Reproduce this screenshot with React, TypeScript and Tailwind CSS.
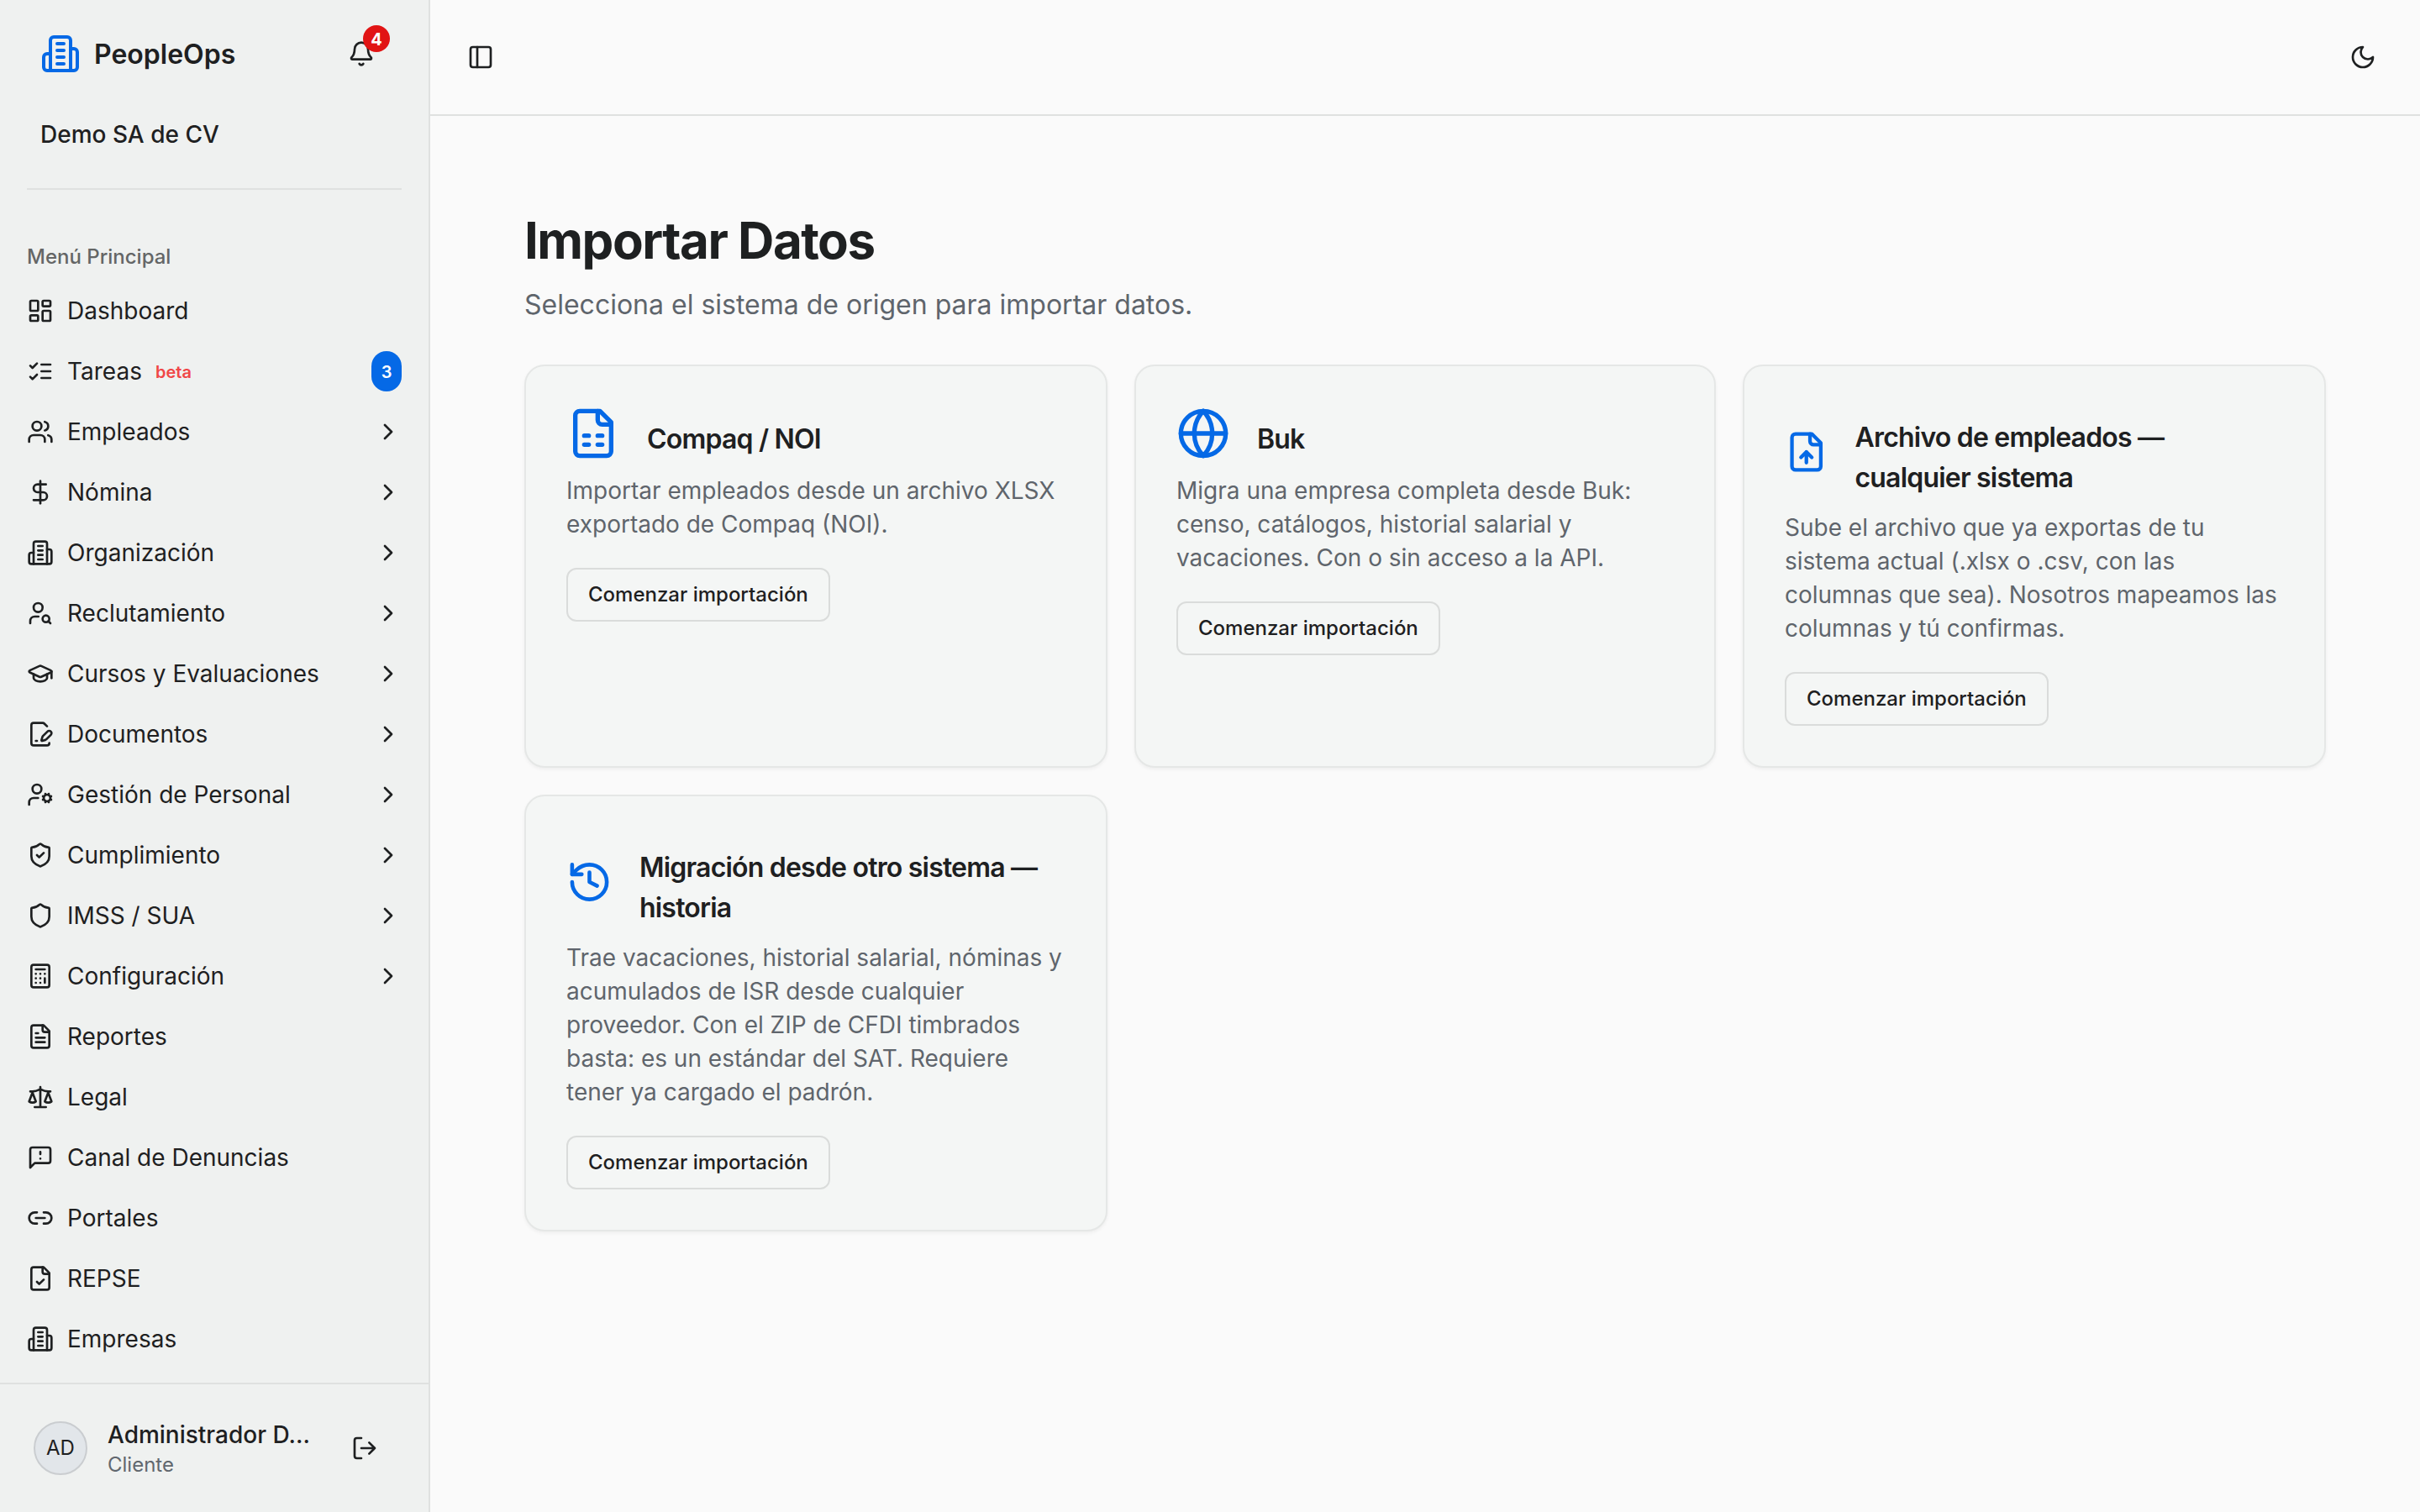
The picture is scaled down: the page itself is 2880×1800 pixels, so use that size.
import type { ReactNode } from "react";

const paths = {
  building: (
    <>
      <path d="M6 22V4a2 2 0 0 1 2-2h8a2 2 0 0 1 2 2v18Z" />
      <path d="M6 12H4a2 2 0 0 0-2 2v6a2 2 0 0 0 2 2h2" />
      <path d="M18 9h2a2 2 0 0 1 2 2v9a2 2 0 0 1-2 2h-2" />
      <path d="M10 6h4M10 10h4M10 14h4M10 18h4" />
    </>
  ),
  bell: (
    <>
      <path d="M10.268 21a2 2 0 0 0 3.464 0" />
      <path d="M3.262 15.326A1 1 0 0 0 4 17h16a1 1 0 0 0 .74-1.673C19.41 13.956 18 12.499 18 8A6 6 0 0 0 6 8c0 4.499-1.411 5.956-2.738 7.326" />
    </>
  ),
  dashboard: (
    <>
      <rect width="7" height="9" x="3" y="3" rx="1" />
      <rect width="7" height="5" x="14" y="3" rx="1" />
      <rect width="7" height="9" x="14" y="12" rx="1" />
      <rect width="7" height="5" x="3" y="16" rx="1" />
    </>
  ),
  checks: <path d="m3 17 2 2 4-4M3 7l2 2 4-4M13 6h8M13 12h8M13 18h8" />,
  users: (
    <>
      <path d="M16 21v-2a4 4 0 0 0-4-4H6a4 4 0 0 0-4 4v2" />
      <circle cx="9" cy="7" r="4" />
      <path d="M22 21v-2a4 4 0 0 0-3-3.87M16 3.13a4 4 0 0 1 0 7.75" />
    </>
  ),
  dollar: (
    <>
      <path d="M12 2v20" />
      <path d="M17 5H9.5a3.5 3.5 0 0 0 0 7h5a3.5 3.5 0 0 1 0 7H6" />
    </>
  ),
  userSearch: (
    <>
      <circle cx="10" cy="7" r="4" />
      <path d="M10.3 15H7a4 4 0 0 0-4 4v2" />
      <circle cx="17" cy="17" r="3" />
      <path d="m21 21-1.9-1.9" />
    </>
  ),
  cap: (
    <>
      <path d="M21.42 10.922a1 1 0 0 0-.019-1.838L12.83 5.18a2 2 0 0 0-1.66 0L2.6 9.08a1 1 0 0 0 0 1.832l8.57 3.908a2 2 0 0 0 1.66 0z" />
      <path d="M22 10v6" />
      <path d="M6 12.5V16a6 3 0 0 0 12 0v-3.5" />
    </>
  ),
  filePen: (
    <>
      <path d="m18 5-2.414-2.414A2 2 0 0 0 14.172 2H6a2 2 0 0 0-2 2v16a2 2 0 0 0 2 2h12a2 2 0 0 0 2-2" />
      <path d="M21.378 12.626a1 1 0 0 0-3.004-3.004l-4.01 4.012a2 2 0 0 0-.506.854l-.837 2.87a.5.5 0 0 0 .62.62l2.87-.837a2 2 0 0 0 .854-.506z" />
      <path d="M8 18h1" />
    </>
  ),
  userCog: (
    <>
      <path d="M10 15H6a4 4 0 0 0-4 4v2" />
      <path d="m14.305 16.53.923-.382M15.228 13.852l-.923-.383M16.852 12.228l-.383-.923M16.852 17.772l-.383.924M19.148 12.228l.383-.923M19.53 18.696l-.382-.924M20.772 13.852l.924-.383M20.772 16.148l.924.383" />
      <circle cx="18" cy="15" r="3" />
      <circle cx="9" cy="7" r="4" />
    </>
  ),
  shieldCheck: (
    <>
      <path d="M20 13c0 5-3.5 7.5-7.66 8.95a1 1 0 0 1-.67-.01C7.5 20.5 4 18 4 13V6a1 1 0 0 1 1-1c2 0 4.5-1.2 6.24-2.72a1.17 1.17 0 0 1 1.52 0C14.51 3.81 17 5 19 5a1 1 0 0 1 1 1z" />
      <path d="m9 12 2 2 4-4" />
    </>
  ),
  shield: (
    <path d="M20 13c0 5-3.5 7.5-7.66 8.95a1 1 0 0 1-.67-.01C7.5 20.5 4 18 4 13V6a1 1 0 0 1 1-1c2 0 4.5-1.2 6.24-2.72a1.17 1.17 0 0 1 1.52 0C14.51 3.81 17 5 19 5a1 1 0 0 1 1 1z" />
  ),
  calculator: (
    <>
      <rect width="16" height="20" x="4" y="2" rx="2" />
      <path d="M8 6h8M16 14v4M16 10h.01M12 10h.01M8 10h.01M12 14h.01M8 14h.01M12 18h.01M8 18h.01" />
    </>
  ),
  fileText: (
    <>
      <path d="M15 2H6a2 2 0 0 0-2 2v16a2 2 0 0 0 2 2h12a2 2 0 0 0 2-2V7Z" />
      <path d="M14 2v4a2 2 0 0 0 2 2h4" />
      <path d="M10 9H8M16 13H8M16 17H8" />
    </>
  ),
  scale: (
    <>
      <path d="m16 16 3-8 3 8c-.87.65-1.92 1-3 1s-2.13-.35-3-1Z" />
      <path d="m2 16 3-8 3 8c-.87.65-1.92 1-3 1s-2.13-.35-3-1Z" />
      <path d="M7 21h10M12 3v18M3 7h2c2 0 5-1 7-2 2 1 5 2 7 2h2" />
    </>
  ),
  messageWarning: (
    <>
      <path d="M21 15a2 2 0 0 1-2 2H7l-4 4V5a2 2 0 0 1 2-2h14a2 2 0 0 1 2 2z" />
      <path d="M12 7v2M12 13h.01" />
    </>
  ),
  link: (
    <>
      <path d="M9 17H7A5 5 0 0 1 7 7h2" />
      <path d="M15 7h2a5 5 0 1 1 0 10h-2" />
      <path d="M8 12h8" />
    </>
  ),
  fileCheck: (
    <>
      <path d="M15 2H6a2 2 0 0 0-2 2v16a2 2 0 0 0 2 2h12a2 2 0 0 0 2-2V7Z" />
      <path d="M14 2v4a2 2 0 0 0 2 2h4" />
      <path d="m9 15 2 2 4-4" />
    </>
  ),
  logout: (
    <>
      <path d="M9 21H5a2 2 0 0 1-2-2V5a2 2 0 0 1 2-2h4" />
      <path d="m16 17 5-5-5-5M21 12H9" />
    </>
  ),
  panel: (
    <>
      <rect width="18" height="18" x="3" y="3" rx="2" />
      <path d="M9 3v18" />
    </>
  ),
  moon: <path d="M12 3a6 6 0 0 0 9 9 9 9 0 1 1-9-9Z" />,
  chevron: <path d="m9 18 6-6-6-6" />,
  fileSheet: (
    <>
      <path d="M15 2H6a2 2 0 0 0-2 2v16a2 2 0 0 0 2 2h12a2 2 0 0 0 2-2V7Z" />
      <path d="M14 2v4a2 2 0 0 0 2 2h4" />
      <path d="M8 13h2M14 13h2M8 17h2M14 17h2" />
    </>
  ),
  globe: (
    <>
      <circle cx="12" cy="12" r="10" />
      <path d="M12 2a14.5 14.5 0 0 0 0 20 14.5 14.5 0 0 0 0-20" />
      <path d="M2 12h20" />
    </>
  ),
  fileUp: (
    <>
      <path d="M15 2H6a2 2 0 0 0-2 2v16a2 2 0 0 0 2 2h12a2 2 0 0 0 2-2V7Z" />
      <path d="M14 2v4a2 2 0 0 0 2 2h4" />
      <path d="M12 12v6M15 15l-3-3-3 3" />
    </>
  ),
  history: (
    <>
      <path d="M3 12a9 9 0 1 0 9-9 9.75 9.75 0 0 0-6.74 2.74L3 8" />
      <path d="M3 3v5h5" />
      <path d="M12 7v5l4 2" />
    </>
  ),
} satisfies Record<string, ReactNode>;

type IconName = keyof typeof paths;

function Icon({ name, className }: { name: IconName; className: string }) {
  return (
    <svg
      viewBox="0 0 24 24"
      fill="none"
      stroke="currentColor"
      strokeWidth="2"
      strokeLinecap="round"
      strokeLinejoin="round"
      className={className}
    >
      {paths[name]}
    </svg>
  );
}

type NavItem = { icon: IconName; label: string; sub?: boolean; beta?: boolean; count?: number };

const nav: NavItem[] = [
  { icon: "dashboard", label: "Dashboard" },
  { icon: "checks", label: "Tareas", beta: true, count: 3 },
  { icon: "users", label: "Empleados", sub: true },
  { icon: "dollar", label: "Nómina", sub: true },
  { icon: "building", label: "Organización", sub: true },
  { icon: "userSearch", label: "Reclutamiento", sub: true },
  { icon: "cap", label: "Cursos y Evaluaciones", sub: true },
  { icon: "filePen", label: "Documentos", sub: true },
  { icon: "userCog", label: "Gestión de Personal", sub: true },
  { icon: "shieldCheck", label: "Cumplimiento", sub: true },
  { icon: "shield", label: "IMSS / SUA", sub: true },
  { icon: "calculator", label: "Configuración", sub: true },
  { icon: "fileText", label: "Reportes" },
  { icon: "scale", label: "Legal" },
  { icon: "messageWarning", label: "Canal de Denuncias" },
  { icon: "link", label: "Portales" },
  { icon: "fileCheck", label: "REPSE" },
  { icon: "building", label: "Empresas" },
];

const sources: { icon: IconName; title: string; text: string }[] = [
  {
    icon: "fileSheet",
    title: "Compaq / NOI",
    text: "Importar empleados desde un archivo XLSX exportado de Compaq (NOI).",
  },
  {
    icon: "globe",
    title: "Buk",
    text: "Migra una empresa completa desde Buk: censo, catálogos, historial salarial y vacaciones. Con o sin acceso a la API.",
  },
  {
    icon: "fileUp",
    title: "Archivo de empleados — cualquier sistema",
    text: "Sube el archivo que ya exportas de tu sistema actual (.xlsx o .csv, con las columnas que sea). Nosotros mapeamos las columnas y tú confirmas.",
  },
  {
    icon: "history",
    title: "Migración desde otro sistema — historia",
    text: "Trae vacaciones, historial salarial, nóminas y acumulados de ISR desde cualquier proveedor. Con el ZIP de CFDI timbrados basta: es un estándar del SAT. Requiere tener ya cargado el padrón.",
  },
];

function Sidebar() {
  return (
    <aside className="flex w-[512px] shrink-0 flex-col border-r-2 border-[#dfe1e0] bg-[#eff1f0]">
      <div className="flex flex-col px-8 pt-8">
        <div className="flex h-16 items-center gap-4 pl-4">
          <Icon name="building" className="size-12 text-[#0569e6]" />
          <span className="pt-0.5 text-[32px] leading-[48px] font-semibold">PeopleOps</span>
          <button className="relative mr-4 ml-auto flex size-16 items-center justify-center">
            <Icon name="bell" className="size-8" />
            <span className="absolute -top-0.5 right-[-2px] flex size-8 items-center justify-center rounded-full bg-[#e11414] pt-0.5 text-[20px] leading-none font-bold text-white">
              4
            </span>
          </button>
        </div>
        <div className="mt-8 flex h-16 items-center pl-4 text-[28px] font-medium">Demo SA de CV</div>
        <div className="mt-8 h-0.5 bg-[#dfe1e0]" />
      </div>
      <nav className="flex flex-1 flex-col px-8 pt-12">
        <div className="flex h-16 items-center text-[24px] font-medium text-[#646666]">Menú Principal</div>
        <ul className="flex flex-col gap-2">
          {nav.map((item) => (
            <li key={item.label} className="flex h-16 items-center text-[28px] leading-10">
              <Icon name={item.icon} className="mr-4 size-8" />
              <span>{item.label}</span>
              {item.beta && (
                <span className="ml-4 pt-0.5 text-[20px] leading-7 font-semibold text-[#f04747]">beta</span>
              )}
              {item.count && (
                <span className="ml-auto flex h-12 w-9 items-center justify-center rounded-full bg-[#0569e6] pt-0.5 text-[20px] font-semibold text-white">
                  {item.count}
                </span>
              )}
              {item.sub && <Icon name="chevron" className="ml-auto size-8" />}
            </li>
          ))}
        </ul>
      </nav>
      <div className="flex h-[154px] items-center border-t-2 border-[#dfe1e0] pl-10">
        <div className="flex size-16 items-center justify-center rounded-full border-2 border-[#cacdd0] bg-[#e2e6ea] text-[24px]">
          AD
        </div>
        <div className="ml-6 flex w-[250px] flex-col">
          <span className="text-[28px] leading-10 font-medium whitespace-nowrap">Administrador D...</span>
          <span className="text-[24px] leading-8 text-[#61676e]">Cliente</span>
        </div>
        <Icon name="logout" className="ml-10 size-8" />
      </div>
    </aside>
  );
}

export default function App() {
  return (
    <div className="flex h-[1800px] w-[2880px] overflow-hidden bg-[#fafafa] font-['Inter',sans-serif] text-[#1e2021] antialiased [font-optical-sizing:none]">
      <Sidebar />
      <div className="flex flex-1 flex-col">
        <header className="flex h-[138px] items-center justify-between border-b-2 border-[#dfe1e0] pr-[52px] pl-11">
          <Icon name="panel" className="size-8" />
          <Icon name="moon" className="size-8" />
        </header>
        <main className="flex flex-col p-28">
          <h1 className="text-[60px] leading-[72px] font-bold tracking-tight">Importar Datos</h1>
          <p className="mt-[17px] text-[32px] leading-[48px] text-[#5f656c]">
            Selecciona el sistema de origen para importar datos.
          </p>
          <div className="mt-[47px] grid grid-cols-[694px_692px_694px] gap-8">
            {sources.map((s) => (
              <section
                key={s.title}
                className="flex flex-col rounded-3xl border-2 border-[#e5e7e6] bg-[#f4f6f5] p-12 shadow-[0_2px_4px_0_rgba(0,0,0,0.05)]"
              >
                <div className="flex items-center gap-8">
                  <Icon name={s.icon} className="h-16 w-16 text-[#0569e6]" />
                  <h2 className="-mb-px pt-[13px] text-[32px] leading-[48px] font-semibold tracking-tight">
                    {s.title}
                  </h2>
                </div>
                <p className="mt-4 text-[28px] leading-10 text-[#5f656c]">{s.text}</p>
                <button className="mt-8 flex h-16 items-center self-start rounded-xl border-2 border-[#dadcdb] px-6 text-[24px] font-medium">
                  Comenzar importación
                </button>
              </section>
            ))}
          </div>
        </main>
      </div>
    </div>
  );
}
